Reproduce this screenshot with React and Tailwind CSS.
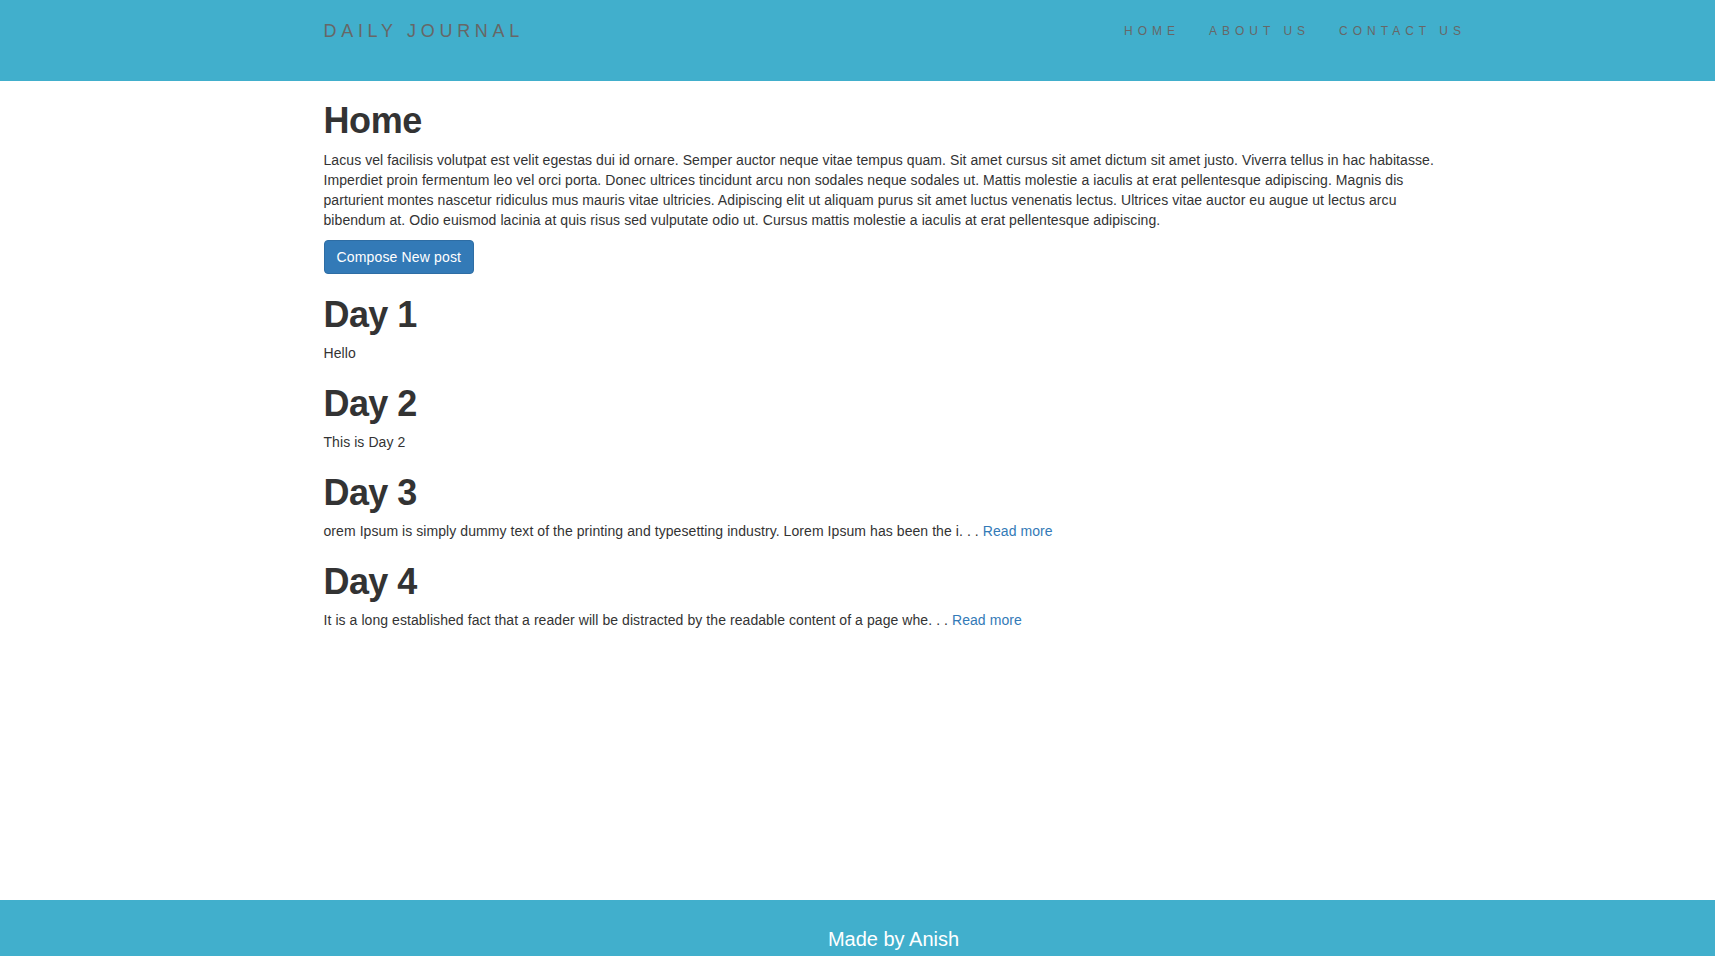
export default function App() {
  const font = "font-['Liberation_Sans','Helvetica_Neue',Helvetica,Arial,sans-serif]";
  const navItems = ["HOME", "ABOUT US", "CONTACT US"];
  const posts = [
    { title: "Day 1", body: "Hello" },
    { title: "Day 2", body: "This is Day 2" },
    {
      title: "Day 3",
      body: "orem Ipsum is simply dummy text of the printing and typesetting industry. Lorem Ipsum has been the i. . . ",
      more: true,
    },
    {
      title: "Day 4",
      body: "It is a long established fact that a reader will be distracted by the readable content of a page whe. . . ",
      more: true,
    },
  ];

  return (
    <div className={`${font} bg-white min-h-screen text-[#333]`}>
      <header className="bg-[#41afcc] h-[81px] pl-[72px]">
        <div className="mx-auto w-[1170px] px-[15px] pt-[21px] flex justify-between items-start">
          <a href="#" className="block text-[18px] leading-[20px] tracking-[4.7px] text-[#676767]">
            DAILY JOURNAL
          </a>
          <ul className="flex -mr-[17px]">
            {navItems.map((item) => (
              <li key={item}>
                <a
                  href="#"
                  className="block px-[14.5px] text-[12px] leading-[20px] tracking-[5px] text-[#676767]"
                >
                  {item}
                </a>
              </li>
            ))}
          </ul>
        </div>
      </header>

      <main className="pl-[72px] min-h-[819px]">
        <div className="flow-root mx-auto w-[1170px] px-[15px] text-[14px] leading-[20px] tracking-[0.07px]">
          <h1 className="mt-5 mb-[9px] text-[36px] leading-[1.1] font-bold tracking-[-0.4px] text-[#333]">
            Home
          </h1>
          <p className="mb-2.5">
            Lacus vel facilisis volutpat est velit egestas dui id ornare. Semper auctor neque vitae tempus quam. Sit amet cursus sit amet dictum sit amet justo. Viverra tellus in hac habitasse.
            <br />
            Imperdiet proin fermentum leo vel orci porta. Donec ultrices tincidunt arcu non sodales neque sodales ut. Mattis molestie a iaculis at erat pellentesque adipiscing. Magnis dis
            <br />
            parturient montes nascetur ridiculus mus mauris vitae ultricies. Adipiscing elit ut aliquam purus sit amet luctus venenatis lectus. Ultrices vitae auctor eu augue ut lectus arcu
            <br />
            bibendum at. Odio euismod lacinia at quis risus sed vulputate odio ut. Cursus mattis molestie a iaculis at erat pellentesque adipiscing.
          </p>
          <div>
            <a
              href="#"
              className="inline-block px-3 py-1.5 border border-[#2e6da4] bg-[#337ab7] text-white rounded-[4px] text-[14px] leading-[20px] tracking-[0.15px]"
            >
              Compose New post
            </a>
          </div>

          {posts.map((p) => (
            <div key={p.title}>
              <h1 className="mt-[21px] mb-[8.5px] text-[36px] leading-[1.1] font-bold tracking-[-0.6px] text-[#333]">
                {p.title}
              </h1>
              <p className="mb-2.5">
                {p.body}
                {p.more && (
                  <a href="#" className="text-[#337ab7]">
                    Read more
                  </a>
                )}
              </p>
            </div>
          ))}
        </div>
      </main>

      <footer className="bg-[#41afcc] pl-[72px] pt-[25px] pb-[25px] text-center text-white text-[20px] leading-[28px]">
        Made by Anish
      </footer>
    </div>
  );
}
